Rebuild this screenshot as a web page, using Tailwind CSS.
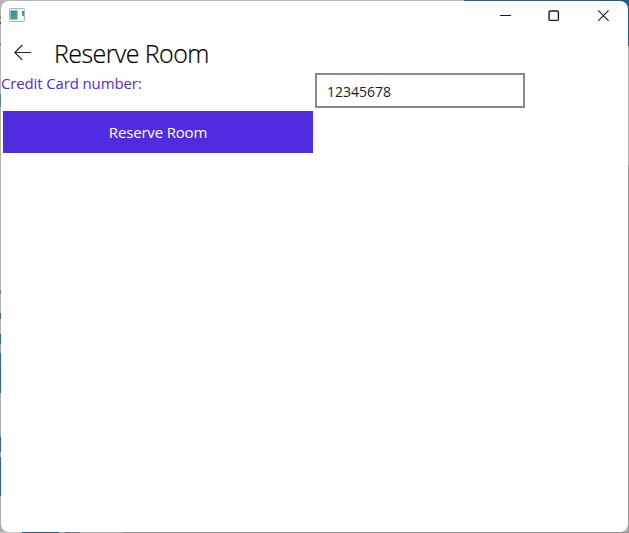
<!DOCTYPE html>
<html lang="en">
<head>
<meta charset="utf-8">
<title>Reserve Room</title>
<script src="https://cdn.jsdelivr.net/npm/@tailwindcss/browser@4"></script>
</head>
<body class="w-[629px] h-[533px] overflow-hidden bg-[#b4b4b4] font-['Open_Sans',sans-serif]">
<div class="relative w-[629px] h-[533px] bg-[#b4b4b4] pt-px pl-px">
  <!-- desktop visible around the window -->
  <div class="absolute left-[464px] top-0 w-[165px] h-[46px] bg-[#176096]"></div>
  <div class="absolute right-0 top-[165px] w-px h-[368px] bg-[#969696]"></div>
  <div class="absolute left-0 top-0 w-px h-[533px] bg-[linear-gradient(to_bottom,#b4b4b4_17px,#555_17px,#555_18px,#b4b4b4_18px,#b4b4b4_22px,#555_22px,#555_24px,#b4b4b4_24px,#b4b4b4_44px,#555_44px,#555_45px,#b4b4b4_45px,#b4b4b4_94px,#5b80a0_94px,#5b80a0_107px,#b4b4b4_107px,#b4b4b4_290px,#7f7480_290px,#7f7480_294px,#b4b4b4_294px,#b4b4b4_313px,#3a6d9b_313px,#3a6d9b_319px,#b4b4b4_319px,#b4b4b4_334px,#2c6599_334px,#2c6599_344px,#a49ea8_344px,#a49ea8_353px,#2c6599_353px,#2c6599_393px,#aaa_393px,#aaa_437px,#2c6599_437px,#2c6599_452px,#aaa_452px,#aaa_457px,#2c6599_457px,#2c6599_496px,#aaa_496px)]"></div>
  <div class="absolute left-0 bottom-0 w-full h-px bg-[linear-gradient(to_right,#c8c8c8_22px,#1d5688_22px,#1d5688_59px,#aaa_59px,#aaa_65px,#496c8c_65px,#496c8c_70px,#737383_70px,#737383_80px,#b0b0b0_80px,#b0b0b0_123px,#929292_123px)]"></div>

  <main class="relative w-[627px] h-[531px] rounded-[8px] bg-white overflow-hidden">
    <header class="flex h-[29px] items-start justify-between">
      <svg class="ml-2 mt-[7px]" width="16" height="14" viewBox="0 0 16 14">
        <defs><linearGradient id="g" x1="0" y1="0" x2="1" y2="1"><stop stop-color="#3c7fae"/><stop offset="1" stop-color="#4fae7c"/></linearGradient></defs>
        <rect x=".5" y=".5" width="15" height="13" rx="1" fill="#f0f1f2" stroke="#b0b4b8"/>
        <rect x="1.5" y="2.5" width="7" height="9" fill="url(#g)"/>
        <rect x="9.5" y="3" width="3" height="8" fill="#fff"/>
        <rect x="13" y="3" width="2" height="5" fill="url(#g)"/>
      </svg>
      <svg class="mr-[19px] mt-[8px]" width="111" height="14" viewBox="498 9 111 14" fill="none" stroke="#1c1c1c">
        <path d="M500 15.5h11"/>
        <rect x="549" y="11" width="9.4" height="9.4" rx="1.2" stroke-width="1.4"/>
        <path d="M598.2 10.4l10.4 10.4M608.6 10.4l-10.4 10.4" stroke-width="1.1"/>
      </svg>
    </header>
    <div class="flex h-[43px] items-center pl-[13px]">
      <svg width="18" height="16" viewBox="0 0 18 16" fill="none" stroke="#222" stroke-width="1.1"><path d="M17 8.5H1M8.2 1L.8 8.5L8.2 16"/></svg>
      <h1 class="ml-[22px] mt-[3px] text-[25px] leading-[36px] font-light tracking-[-0.58px] text-black [-webkit-text-stroke:0.2px_black] whitespace-nowrap">Reserve Room</h1>
    </div>
    <div class="grid grid-cols-[314px_1fr]">
      <label for="card" class="block text-[15px] leading-[21px] tracking-[-0.14px] text-[#512bdf] whitespace-nowrap">Credit Card number:</label>
      <input id="card" value="12345678" class="block w-[210px] h-[35px] border-2 border-[#8a8a8a] pl-[10px] pt-[2px] text-[14px] text-[#1b1b1b] bg-white outline-none">
      <button class="ml-[2px] mt-[3px] w-[310px] h-[42px] bg-[#512bdf] text-[15px] tracking-[-0.17px] text-white">Reserve Room</button>
    </div>
  </main>
</div>
</body>
</html>
